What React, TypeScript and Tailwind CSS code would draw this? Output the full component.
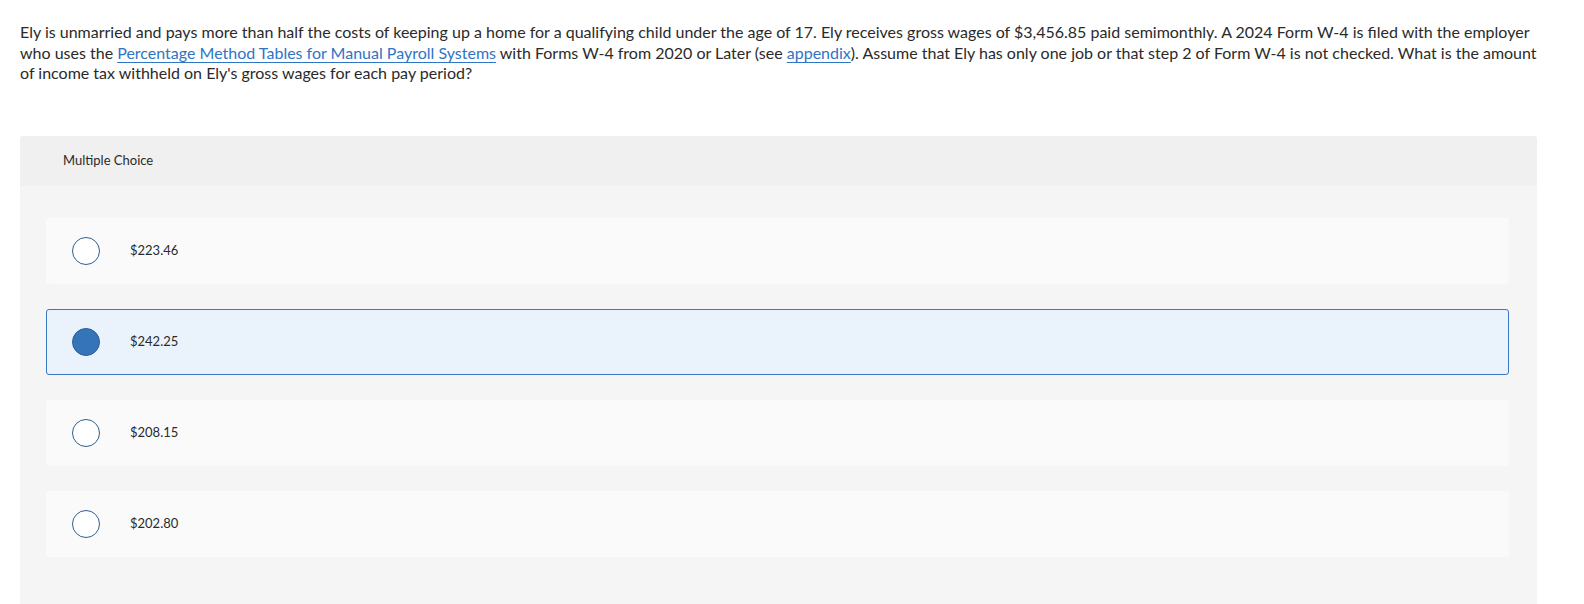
import React, { useState } from 'react';

const choices = ['$223.46', '$242.25', '$208.15', '$202.80'];

const Radio: React.FC<{ checked: boolean }> = ({ checked }) => (
  <span
    className={`block w-[28px] h-[28px] shrink-0 rounded-full border-[1.5px] ${
      checked ? 'bg-[#3674ba] border-[#2c5f99]' : 'bg-white border-[#2f5f8f]'
    }`}
  />
);

export default function App() {
  const [selected, setSelected] = useState(1);

  return (
    <div className="min-h-[604px] bg-white text-[#2a2a2a] font-['Lato','Liberation_Sans',sans-serif]">
      <p className="pl-[20px] pt-[22px] text-[16px] leading-[20.5px] w-[1540px]">
        Ely is unmarried and pays more than half the costs of keeping up a home for a qualifying child under the age of 17. Ely
        receives gross wages of $3,456.85 paid semimonthly. A 2024 Form W-4 is filed with the employer who uses the{' '}
        <a href="#" className="text-[#2f74c5] underline underline-offset-[3px]">
          Percentage Method Tables for Manual Payroll Systems
        </a>{' '}
        with Forms W-4 from 2020 or Later (see{' '}
        <a href="#" className="text-[#2f74c5] underline underline-offset-[3px]">
          appendix
        </a>
        ). Assume that Ely has only one job or that step 2 of Form W-4 is not checked. What is the amount of income tax withheld
        on Ely's gross wages for each pay period?
      </p>

      <div className="ml-[20px] mt-[52px] w-[1517px] rounded-t-[3px] overflow-hidden">
        <div className="h-[50px] bg-[#f0f0f0] flex items-center pl-[43px] text-[13px]">Multiple Choice</div>
        <div className="bg-[#f5f5f5] pt-[32px] pb-[60px] pl-[26px] pr-[28px] flex flex-col gap-[25px]">
          {choices.map((c, i) => {
            const on = i === selected;
            return (
              <button
                key={c}
                onClick={() => setSelected(i)}
                className={`h-[66px] flex items-center pl-[25px] rounded-[3px] border text-left ${
                  on ? 'bg-[#eaf2fc] border-[#3a78c4]' : 'bg-[#fafafa] border-transparent'
                }`}
              >
                <Radio checked={on} />
                <span className="ml-[30px] text-[13px]">{c}</span>
              </button>
            );
          })}
        </div>
      </div>
    </div>
  );
}
